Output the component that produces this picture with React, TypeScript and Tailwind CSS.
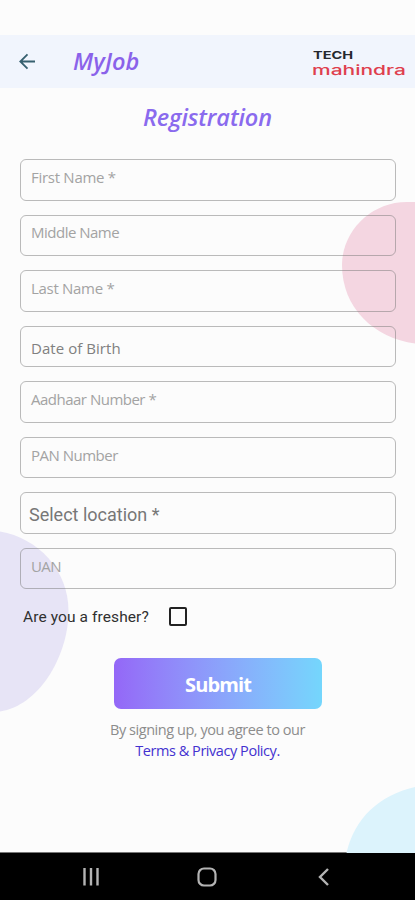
import { useState } from 'react';

type Field = {
  id: string;
  label: string;
  labelClass: string;
};

const FIELDS: Field[] = [
  { id: 'firstName', label: 'First Name *', labelClass: 'pl-[10px] pt-[6px] text-[15px] tracking-[-0.28px] text-[#a3a3a3]' },
  { id: 'middleName', label: 'Middle Name', labelClass: 'pl-[10px] pt-[5px] text-[15px] tracking-[-0.5px] text-[#a3a3a3]' },
  { id: 'lastName', label: 'Last Name *', labelClass: 'pl-[10px] pt-[6px] text-[15px] tracking-[-0.3px] text-[#a3a3a3]' },
  { id: 'birthDate', label: 'Date of Birth', labelClass: 'pl-[10px] pt-[10px] text-[15px] tracking-[0.05px] text-[#808080]' },
  { id: 'aadhaar', label: 'Aadhaar Number *', labelClass: 'pl-[10px] pt-[6px] text-[15px] tracking-[-0.5px] text-[#a3a3a3]' },
  { id: 'pan', label: 'PAN Number', labelClass: 'pl-[10px] pt-[6px] text-[15px] tracking-[-0.5px] text-[#a3a3a3]' },
  { id: 'location', label: 'Select location *', labelClass: "pl-[8px] pt-[10.5px] font-['Roboto',sans-serif] text-[18px] text-[#777777]" },
  { id: 'uan', label: 'UAN', labelClass: 'pl-[10px] pt-[6px] text-[15px] tracking-[-0.6px] text-[#a3a3a3]' },
];

function Blobs() {
  return (
    <svg className="pointer-events-none absolute inset-0" width="415" height="853" viewBox="0 0 415 853">
      <path d="M415 202H407C370 202 342 232 342 265C342 308 374 338 415 343.500Z" fill="#f4d6e1" />
      <path d="M0 531.500C38 538 68.500 570 68.500 611C68.500 657 38 706 0 711.500Z" fill="#e7e4f6" />
      <path d="M346.500 853C354 819 379 795 415 787V853Z" fill="#dcf3fc" />
    </svg>
  );
}

function BackArrow() {
  return (
    <svg width="18" height="18" viewBox="0 0 18 18" fill="none" stroke="#37606f" strokeWidth="1.8">
      <path d="M17 8.500H2.500M9.500 1.300L2.300 8.500L9.500 15.700" />
    </svg>
  );
}

function Logo() {
  return (
    <svg width="96" height="32" viewBox="0 0 96 32" className="font-['Inter',sans-serif]">
      <text x="1" y="13" fontSize="10.8" fontWeight="700" fill="#25282f" textLength="40" lengthAdjust="spacingAndGlyphs">TECH</text>
      <text x="0" y="29" fontSize="13.5" fontWeight="500" fill="#df3f4e" textLength="94" lengthAdjust="spacingAndGlyphs">mahindra</text>
    </svg>
  );
}

function NavBar() {
  return (
    <nav className="flex h-[48px] items-center border-t border-[#777777] bg-black pl-[82px]">
      <svg width="18" height="18" viewBox="0 0 18 18" stroke="#b4b4b4" strokeWidth="2.4">
        <path d="M2.500 0V17.500M9 0V17.500M15.500 0V17.500" />
      </svg>
      <svg className="ml-[97px]" width="20" height="20" viewBox="0 0 20 20" fill="none" stroke="#b4b4b4" strokeWidth="2.2">
        <rect x="1.500" y="1.500" width="17" height="17" rx="5.500" />
      </svg>
      <svg className="ml-[100px]" width="13" height="18" viewBox="0 0 13 18" fill="none" stroke="#b4b4b4" strokeWidth="2.4">
        <path d="M11 1L3 9L11 17" />
      </svg>
    </nav>
  );
}

export default function App() {
  const [fresher, setFresher] = useState(false);

  return (
    <div className="relative flex h-[900px] w-[415px] flex-col overflow-hidden bg-[#fcfcfc] font-['Open_Sans',sans-serif]">
      <Blobs />

      <header className="mt-[35px] flex h-[53px] items-center bg-[#f1f5fd] pl-[18px]">
        <BackArrow />
        <h1 className="mb-[2px] ml-[37px] w-[80px] text-[23.500px] leading-[32px] font-semibold tracking-[0.1px] text-[#8a62ea] italic">MyJob</h1>
        <div className="ml-auto pr-[7px]">
          <Logo />
        </div>
      </header>

      <main className="relative flex flex-1 flex-col">
        <h2 className="mt-[13px] text-center text-[23.500px] leading-[32px] font-semibold tracking-[-0.1px] text-[#8a6aee] italic">
          Registration
        </h2>

        <div className="mt-[26px] flex flex-col gap-[14px] pr-[19px] pl-[20px]">
          {FIELDS.map(f => (
            <div key={f.id} className="h-[41.5px] rounded-[6px] border-[1.500px] border-[#777777]/50">
              <span className={`block leading-[22px] whitespace-nowrap ${f.labelClass}`}>{f.label}</span>
            </div>
          ))}
        </div>

        <div className="mt-[17px] flex h-[20px] items-center pl-[23px]">
          <span className="w-[146px] pt-[4px] font-['Roboto',sans-serif] text-[15.500px] tracking-[0.1px] whitespace-nowrap text-[#303030]">Are you a fresher?</span>
          <button
            type="button"
            aria-label="Are you a fresher?"
            onClick={() => setFresher(!fresher)}
            className={`h-[19px] w-[18px] rounded-[2px] border-2 border-[#222222] ${fresher ? 'bg-[#8a62ea]' : ''}`}
          />
        </div>

        <button
          type="button"
          className="mt-[32px] ml-[114px] h-[51px] w-[208px] rounded-[7px] bg-linear-to-r from-[#9467f7] to-[#74d6fc] pt-[2px] text-[20px] font-bold tracking-[-0.9px] text-white"
        >
          Submit
        </button>

        <p className="mt-[11px] text-center text-[14.500px] leading-[20.500px] tracking-[-0.45px] text-[#8c8c8c]">
          By signing up, you agree to our
          <br />
          <a className="text-[#4331d0]">Terms &amp; Privacy Policy.</a>
        </p>
      </main>

      <NavBar />
    </div>
  );
}
